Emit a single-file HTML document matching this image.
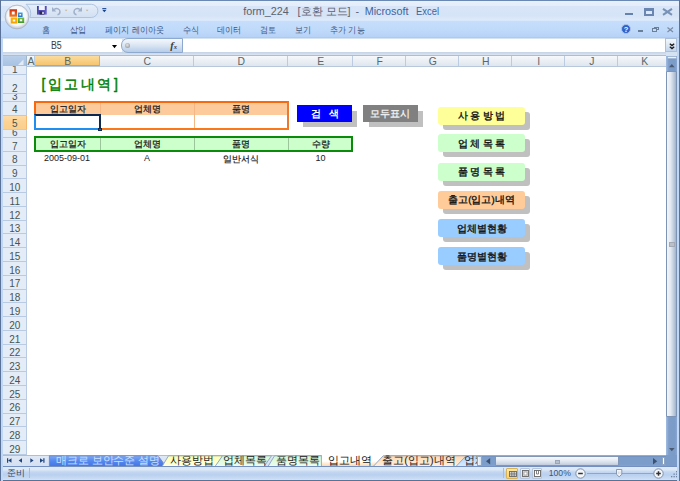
<!DOCTYPE html><html><head><meta charset='utf-8'><style>
*{margin:0;padding:0;box-sizing:border-box}
html,body{width:680px;height:481px;overflow:hidden;background:#fff;font-family:"Liberation Sans",sans-serif}
.a{position:absolute}
.t{position:absolute;white-space:nowrap;line-height:1}
svg{position:absolute}
</style></head><body><div class="a" style="left:0.00px;top:0.00px;width:680.00px;height:481.00px;background:#c4d7ef"></div>
<div class="a" style="left:0.00px;top:0.00px;width:680.00px;height:19.50px;background:linear-gradient(#e8f0fb 0,#e4edfa 4.5px,#d8e5f8 5.5px,#d6e4f7 15px,#e0ebf9 19.5px);border-top:1px solid #6a88b4"></div>
<div class="a" style="left:1.00px;top:19.50px;width:678.00px;height:18.80px;background:linear-gradient(#e6effb 0,#c6defc 1.2px,#bfd9fa 60%,#b7d2f7 94%,#a6c3ec)"></div>
<div class="a" style="left:1.00px;top:38.30px;width:678.00px;height:17.70px;background:#d5e2f2"></div>
<div class="a" style="left:3.00px;top:38.50px;width:118.50px;height:13.80px;background:#fff"></div>
<div class="a" style="left:183.00px;top:38.50px;width:483.00px;height:13.80px;background:#fff"></div>
<div class="a" style="left:3.00px;top:52.30px;width:663.00px;height:2.70px;background:linear-gradient(#c3d2e6,#dbe5f1)"></div>
<div class="a" style="left:3.00px;top:54.80px;width:663.00px;height:1.20px;background:#a9bedb"></div>
<div class="a" style="left:121.40px;top:38.40px;width:61.40px;height:14.20px;background:linear-gradient(#f5f8fc,#dce7f4 45%,#b6cdea);border:1px solid #8ea9cf;border-radius:7px 0 0 7px"></div>
<div class="a" style="left:125.30px;top:43.00px;width:5.00px;height:5.00px;background:radial-gradient(circle at 45% 40%,#e6e6e6,#a0a4aa 70%,#7f8894);border-radius:50%"></div>
<div class="t" style="left:170.3px;top:40.8px;font-family:'Liberation Serif',serif;font-size:10.5px;color:#3a3a3a;font-weight:bold"><i>f</i><span style='font-size:6.5px;position:relative;top:0.5px'><i>x</i></span></div>
<div class="t" style="left:50.80px;top:40.94px;font-size:10px;color:#3a3a3a;transform:scaleX(0.88);transform-origin:0 0">B5</div>
<svg style="left:111.8px;top:44.5px" width="5" height="4"><path d="M0 0H5L2.5 3.3Z" fill="#000"/></svg>
<div class="a" style="left:665.30px;top:38.30px;width:11.50px;height:14.00px;background:linear-gradient(#f3f7fc,#dce7f4 50%,#c2d5ee);border:1px solid #a9bfdc"></div>
<svg style="left:668.5px;top:42.5px" width="6" height="7"><path d="M0.8 0.8L3 2.6L5.2 0.8M0.8 3.8L3 5.6L5.2 3.8" stroke="#1a1a1a" stroke-width="1.3" fill="none"/></svg>
<div class="t" style="left:243.20px;top:6.36px;font-size:10.8px;color:#5a6270">form_224</div>
<div class="t" style="left:297.60px;top:6.36px;font-size:10.8px;color:#5a6270">[호환 모드]</div>
<div class="t" style="left:355.40px;top:6.36px;font-size:10.8px;color:#5a6270">-</div>
<div class="t" style="left:364.70px;top:6.36px;font-size:10.8px;color:#3d64a0">Microsoft</div>
<div class="t" style="left:415.70px;top:6.36px;font-size:10.8px;color:#3d64a0;transform:scaleX(0.87);transform-origin:0 0">Excel</div>
<svg style="left:0;top:0" width="110" height="20"><defs><linearGradient id="qp" x1="0" y1="0" x2="0" y2="1"><stop offset="0" stop-color="#e6eefa"/><stop offset="1" stop-color="#d2e0f3"/></linearGradient></defs><path d="M26 4.3H91.3A6.6 6.6 0 0 1 91.3 17.5H30A12 12 0 0 0 26 4.3Z" fill="url(#qp)" stroke="#a9bfdc" stroke-width="0.9"/></svg>
<svg style="left:37px;top:6px" width="10" height="9" viewBox="0 0 10 9">
<defs><linearGradient id="sv" x1="0" y1="0" x2="1" y2="1"><stop offset="0" stop-color="#3a3a9a"/><stop offset="1" stop-color="#6f62d6"/></linearGradient></defs>
<rect x="0" y="0" width="9.7" height="8.6" fill="url(#sv)"/><rect x="1.8" y="0" width="6" height="4" fill="#eef2fb"/><rect x="2.5" y="5.3" width="4.8" height="3.3" fill="#2a2a55"/><rect x="5.3" y="5.8" width="1.4" height="2.3" fill="#fff"/>
</svg>
<svg style="left:50px;top:5px" width="48" height="12" viewBox="0 0 48 12">
<path d="M4 4.5C7 2.5 10 4 10 6.8C10 8.5 9 9.5 7.5 9.8" stroke="#9fb0c8" stroke-width="1.5" fill="none"/><path d="M2 2V6.5H6.3Z" fill="#9fb0c8"/>
<path d="M14.8 4.8L17.4 4.8L16.1 6.3Z" fill="#c9b08a"/>
<path d="M30 4.5C27 2.5 24 4 24 6.8C24 8.5 25 9.5 26.5 9.8" stroke="#9fb0c8" stroke-width="1.5" fill="none"/><path d="M32 2V6.5H27.7Z" fill="#9fb0c8"/>
<path d="M35.8 4.8L38.4 4.8L37.1 6.3Z" fill="#c9b08a"/>
</svg>
<svg style="left:101.5px;top:7.8px" width="5" height="5"><rect x="0.3" y="0" width="4" height="0.9" fill="#15428b"/><path d="M0.2 1.8H4.5L2.35 4.2Z" fill="#15428b"/></svg>
<svg style="left:2px;top:2px" width="30" height="30" viewBox="0 0 30 30">
<defs><radialGradient id="ob" cx="50%" cy="45%" r="55%"><stop offset="0" stop-color="#ffffff"/><stop offset="0.72" stop-color="#f6f7f9"/><stop offset="0.85" stop-color="#d9dee6"/><stop offset="1" stop-color="#b8c0cc"/></radialGradient>
<linearGradient id="lr" x1="0" y1="0" x2="0" y2="1"><stop offset="0" stop-color="#cf2e12"/><stop offset="1" stop-color="#f07a1e"/></linearGradient>
<linearGradient id="ly" x1="0" y1="0" x2="0" y2="1"><stop offset="0" stop-color="#ffb400"/><stop offset="1" stop-color="#f5a000"/></linearGradient>
<linearGradient id="lg" x1="0" y1="0" x2="0" y2="1"><stop offset="0" stop-color="#7bc043"/><stop offset="1" stop-color="#3f9a2a"/></linearGradient>
<linearGradient id="lb" x1="0" y1="0" x2="0" y2="1"><stop offset="0" stop-color="#3aa0ee"/><stop offset="1" stop-color="#1f74c8"/></linearGradient></defs>
<circle cx="15" cy="15" r="11.9" fill="url(#ob)" stroke="#a9b3c1" stroke-width="0.8"/>
<path d="M7.5 7.2H15V14.7H7.5Z M9.8 9.5V12.4H12.7V9.5Z" fill="url(#lr)" fill-rule="evenodd"/>
<path d="M15.9 10.6H20.6V15H15.9Z M17.4 12.1V13.5H19.1V12.1Z" fill="url(#lb)" fill-rule="evenodd"/>
<path d="M8.7 15.6H15.3V21.6H8.7Z M10.8 17.6V19.6H13.2V17.6Z" fill="url(#ly)" fill-rule="evenodd"/>
<path d="M15.9 15.6H22.2V21H15.9Z M17.8 17.3V19.3H20.2V17.3Z" fill="url(#lg)" fill-rule="evenodd"/>
</svg>
<div class="a" style="left:625.30px;top:13.00px;width:7.70px;height:2.20px;background:#6582ac"></div>
<div class="a" style="left:643.50px;top:8.00px;width:10.00px;height:7.50px;border:2px solid #6a86b0;border-top:3px solid #6a86b0;background:#dde8f7"></div>
<svg style="left:662px;top:8px" width="11" height="7.5"><path d="M1 0.8L10 6.8M10 0.8L1 6.8" stroke="#7891b7" stroke-width="2"/></svg>
<div class="t" style="left:42.00px;top:26.18px;font-size:9px;color:#3b5683;transform:scaleX(0.9);transform-origin:0 0">홈</div>
<div class="t" style="left:70.00px;top:26.18px;font-size:9px;color:#3b5683;transform:scaleX(0.9);transform-origin:0 0">삽입</div>
<div class="t" style="left:105.00px;top:26.18px;font-size:9px;color:#3b5683;transform:scaleX(0.9);transform-origin:0 0">페이지 레이아웃</div>
<div class="t" style="left:182.50px;top:26.18px;font-size:9px;color:#3b5683;transform:scaleX(0.9);transform-origin:0 0">수식</div>
<div class="t" style="left:217.00px;top:26.18px;font-size:9px;color:#3b5683;transform:scaleX(0.9);transform-origin:0 0">데이터</div>
<div class="t" style="left:260.00px;top:26.18px;font-size:9px;color:#3b5683;transform:scaleX(0.9);transform-origin:0 0">검토</div>
<div class="t" style="left:295.00px;top:26.18px;font-size:9px;color:#3b5683;transform:scaleX(0.9);transform-origin:0 0">보기</div>
<div class="t" style="left:330.00px;top:26.18px;font-size:9px;color:#3b5683;transform:scaleX(0.9);transform-origin:0 0">추가 기능</div>
<svg style="left:621px;top:24px" width="10" height="10"><circle cx="5" cy="5" r="4.5" fill="#2d63cc" stroke="#b3c6e3" stroke-width="0.9"/><text x="5" y="8" font-size="7.5" font-weight="bold" fill="#fff" text-anchor="middle" font-family="Liberation Sans">?</text></svg>
<div class="a" style="left:638.00px;top:30.30px;width:5.00px;height:1.60px;background:#6a7f99"></div>
<div class="a" style="left:653.50px;top:26.50px;width:5.00px;height:3.50px;border:1px solid #6a7f99;border-top:1.6px solid #6a7f99"></div>
<div class="a" style="left:651.80px;top:28.30px;width:5.00px;height:3.50px;background:#c5dbf6;border:1px solid #6a7f99;border-top:1.6px solid #6a7f99"></div>
<svg style="left:667px;top:27px" width="6.5" height="5.5"><path d="M0.5 0.5L6 5M6 0.5L0.5 5" stroke="#7a8ba3" stroke-width="1.2"/></svg>
<div class="a" style="left:3.00px;top:56.00px;width:663.00px;height:399.00px;background:#fff"></div>
<div class="a" style="left:3.00px;top:56.00px;width:663.00px;height:10.80px;background:linear-gradient(#f6f8fb,#dfe6ef);border-bottom:1px solid #b7c7dc"></div>
<div class="a" style="left:3.00px;top:56.00px;width:23.60px;height:10.10px;background:linear-gradient(#b9cfea,#a7c1e3);border-right:1px solid #9eb6ce"></div>
<svg style="left:17px;top:58.5px" width="8" height="7"><path d="M6.5 0.5V6H1Z" fill="#e3ebf5"/></svg>
<div class="a" style="left:26.60px;top:56.00px;width:8.70px;height:10.10px;border-right:1.5px solid #bccbdf;"></div>
<div class="t" style="left:-119.05px;top:57.40px;width:300px;text-align:center;font-size:10.4px;color:#5a6868">A</div>
<div class="a" style="left:35.30px;top:56.00px;width:64.90px;height:10.10px;background:linear-gradient(#fadc9d,#f6c46f);border-right:1px solid #f2a54a;border-bottom:1px solid #f29a3a;"></div>
<div class="t" style="left:-82.25px;top:57.40px;width:300px;text-align:center;font-size:10.4px;color:#5a6868">B</div>
<div class="a" style="left:100.20px;top:56.00px;width:93.90px;height:10.10px;border-right:1.5px solid #bccbdf;"></div>
<div class="t" style="left:-2.85px;top:57.40px;width:300px;text-align:center;font-size:10.4px;color:#5a6868">C</div>
<div class="a" style="left:194.10px;top:56.00px;width:94.10px;height:10.10px;border-right:1.5px solid #bccbdf;"></div>
<div class="t" style="left:91.15px;top:57.40px;width:300px;text-align:center;font-size:10.4px;color:#5a6868">D</div>
<div class="a" style="left:288.20px;top:56.00px;width:64.80px;height:10.10px;border-right:1.5px solid #bccbdf;"></div>
<div class="t" style="left:170.60px;top:57.40px;width:300px;text-align:center;font-size:10.4px;color:#5a6868">E</div>
<div class="a" style="left:353.00px;top:56.00px;width:53.30px;height:10.10px;border-right:1.5px solid #bccbdf;"></div>
<div class="t" style="left:229.65px;top:57.40px;width:300px;text-align:center;font-size:10.4px;color:#5a6868">F</div>
<div class="a" style="left:406.30px;top:56.00px;width:53.00px;height:10.10px;border-right:1.5px solid #bccbdf;"></div>
<div class="t" style="left:282.80px;top:57.40px;width:300px;text-align:center;font-size:10.4px;color:#5a6868">G</div>
<div class="a" style="left:459.30px;top:56.00px;width:53.00px;height:10.10px;border-right:1.5px solid #bccbdf;"></div>
<div class="t" style="left:335.80px;top:57.40px;width:300px;text-align:center;font-size:10.4px;color:#5a6868">H</div>
<div class="a" style="left:512.30px;top:56.00px;width:53.00px;height:10.10px;border-right:1.5px solid #bccbdf;"></div>
<div class="t" style="left:388.80px;top:57.40px;width:300px;text-align:center;font-size:10.4px;color:#5a6868">I</div>
<div class="a" style="left:565.30px;top:56.00px;width:52.90px;height:10.10px;border-right:1.5px solid #bccbdf;"></div>
<div class="t" style="left:441.75px;top:57.40px;width:300px;text-align:center;font-size:10.4px;color:#5a6868">J</div>
<div class="a" style="left:618.20px;top:56.00px;width:52.80px;height:10.10px;border-right:1.5px solid #bccbdf;"></div>
<div class="t" style="left:494.60px;top:57.40px;width:300px;text-align:center;font-size:10.4px;color:#5a6868">K</div>
<div class="a" style="left:3.00px;top:66.10px;width:23.60px;height:389.00px;background:#e4ecf7;border-right:1px solid #b9cbe2"></div>
<div class="a" style="left:3.00px;top:66.60px;width:23.60px;height:8.50px;border-bottom:1px solid #b9cbe2;"></div>
<div class="a" style="left:3.00px;top:75.10px;width:23.60px;height:18.90px;border-bottom:1px solid #b9cbe2;"></div>
<div class="a" style="left:3.00px;top:94.00px;width:23.60px;height:8.10px;border-bottom:1px solid #b9cbe2;"></div>
<div class="a" style="left:3.00px;top:102.10px;width:23.60px;height:13.50px;border-bottom:1px solid #b9cbe2;"></div>
<div class="a" style="left:3.00px;top:115.60px;width:23.60px;height:14.80px;background:linear-gradient(#fddca8,#fcd395 40%,#fbcf8c);border-right:1px solid #f4b870;border-bottom:1px solid #f6c483;"></div>
<div class="a" style="left:3.00px;top:130.40px;width:23.60px;height:7.60px;border-bottom:1px solid #b9cbe2;"></div>
<div class="a" style="left:3.00px;top:138.00px;width:23.60px;height:13.78px;border-bottom:1px solid #b9cbe2;"></div>
<div class="a" style="left:3.00px;top:151.78px;width:23.60px;height:13.78px;border-bottom:1px solid #b9cbe2;"></div>
<div class="a" style="left:3.00px;top:165.56px;width:23.60px;height:13.78px;border-bottom:1px solid #b9cbe2;"></div>
<div class="a" style="left:3.00px;top:179.34px;width:23.60px;height:13.78px;border-bottom:1px solid #b9cbe2;"></div>
<div class="a" style="left:3.00px;top:193.12px;width:23.60px;height:13.78px;border-bottom:1px solid #b9cbe2;"></div>
<div class="a" style="left:3.00px;top:206.90px;width:23.60px;height:13.78px;border-bottom:1px solid #b9cbe2;"></div>
<div class="a" style="left:3.00px;top:220.68px;width:23.60px;height:13.78px;border-bottom:1px solid #b9cbe2;"></div>
<div class="a" style="left:3.00px;top:234.46px;width:23.60px;height:13.78px;border-bottom:1px solid #b9cbe2;"></div>
<div class="a" style="left:3.00px;top:248.24px;width:23.60px;height:13.78px;border-bottom:1px solid #b9cbe2;"></div>
<div class="a" style="left:3.00px;top:262.02px;width:23.60px;height:13.78px;border-bottom:1px solid #b9cbe2;"></div>
<div class="a" style="left:3.00px;top:275.80px;width:23.60px;height:13.78px;border-bottom:1px solid #b9cbe2;"></div>
<div class="a" style="left:3.00px;top:289.58px;width:23.60px;height:13.78px;border-bottom:1px solid #b9cbe2;"></div>
<div class="a" style="left:3.00px;top:303.36px;width:23.60px;height:13.78px;border-bottom:1px solid #b9cbe2;"></div>
<div class="a" style="left:3.00px;top:317.14px;width:23.60px;height:13.78px;border-bottom:1px solid #b9cbe2;"></div>
<div class="a" style="left:3.00px;top:330.92px;width:23.60px;height:13.78px;border-bottom:1px solid #b9cbe2;"></div>
<div class="a" style="left:3.00px;top:344.70px;width:23.60px;height:13.78px;border-bottom:1px solid #b9cbe2;"></div>
<div class="a" style="left:3.00px;top:358.48px;width:23.60px;height:13.78px;border-bottom:1px solid #b9cbe2;"></div>
<div class="a" style="left:3.00px;top:372.26px;width:23.60px;height:13.78px;border-bottom:1px solid #b9cbe2;"></div>
<div class="a" style="left:3.00px;top:386.04px;width:23.60px;height:13.78px;border-bottom:1px solid #b9cbe2;"></div>
<div class="a" style="left:3.00px;top:399.82px;width:23.60px;height:13.78px;border-bottom:1px solid #b9cbe2;"></div>
<div class="a" style="left:3.00px;top:413.60px;width:23.60px;height:13.78px;border-bottom:1px solid #b9cbe2;"></div>
<div class="a" style="left:3.00px;top:427.38px;width:23.60px;height:13.78px;border-bottom:1px solid #b9cbe2;"></div>
<div class="a" style="left:3.00px;top:441.16px;width:23.60px;height:13.78px;border-bottom:1px solid #b9cbe2;"></div>
<div class="a" style="left:3px;top:66.10px;width:23.6px;height:8.50px;overflow:hidden"><div class="t" style="left:0;top:-1.17px;width:23.6px;text-align:center;font-size:10px;color:#465454">1</div></div>
<div class="a" style="left:3px;top:74.60px;width:23.6px;height:18.90px;overflow:hidden"><div class="t" style="left:0;top:9.24px;width:23.6px;text-align:center;font-size:10px;color:#465454">2</div></div>
<div class="a" style="left:3px;top:93.50px;width:23.6px;height:8.10px;overflow:hidden"><div class="t" style="left:0;top:-1.57px;width:23.6px;text-align:center;font-size:10px;color:#465454">3</div></div>
<div class="a" style="left:3px;top:101.60px;width:23.6px;height:13.50px;overflow:hidden"><div class="t" style="left:0;top:3.84px;width:23.6px;text-align:center;font-size:10px;color:#465454">4</div></div>
<div class="a" style="left:3px;top:115.10px;width:23.6px;height:14.80px;overflow:hidden"><div class="t" style="left:0;top:4.34px;width:23.6px;text-align:center;font-size:10px;color:#465454">5</div></div>
<div class="a" style="left:3px;top:129.90px;width:23.6px;height:7.60px;overflow:hidden"><div class="t" style="left:0;top:-2.07px;width:23.6px;text-align:center;font-size:10px;color:#465454">6</div></div>
<div class="a" style="left:3px;top:137.50px;width:23.6px;height:13.78px;overflow:hidden"><div class="t" style="left:0;top:4.12px;width:23.6px;text-align:center;font-size:10px;color:#465454">7</div></div>
<div class="a" style="left:3px;top:151.28px;width:23.6px;height:13.78px;overflow:hidden"><div class="t" style="left:0;top:4.12px;width:23.6px;text-align:center;font-size:10px;color:#465454">8</div></div>
<div class="a" style="left:3px;top:165.06px;width:23.6px;height:13.78px;overflow:hidden"><div class="t" style="left:0;top:4.12px;width:23.6px;text-align:center;font-size:10px;color:#465454">9</div></div>
<div class="a" style="left:3px;top:178.84px;width:23.6px;height:13.78px;overflow:hidden"><div class="t" style="left:0;top:4.12px;width:23.6px;text-align:center;font-size:10px;color:#465454">10</div></div>
<div class="a" style="left:3px;top:192.62px;width:23.6px;height:13.78px;overflow:hidden"><div class="t" style="left:0;top:4.12px;width:23.6px;text-align:center;font-size:10px;color:#465454">11</div></div>
<div class="a" style="left:3px;top:206.40px;width:23.6px;height:13.78px;overflow:hidden"><div class="t" style="left:0;top:4.12px;width:23.6px;text-align:center;font-size:10px;color:#465454">12</div></div>
<div class="a" style="left:3px;top:220.18px;width:23.6px;height:13.78px;overflow:hidden"><div class="t" style="left:0;top:4.12px;width:23.6px;text-align:center;font-size:10px;color:#465454">13</div></div>
<div class="a" style="left:3px;top:233.96px;width:23.6px;height:13.78px;overflow:hidden"><div class="t" style="left:0;top:4.12px;width:23.6px;text-align:center;font-size:10px;color:#465454">14</div></div>
<div class="a" style="left:3px;top:247.74px;width:23.6px;height:13.78px;overflow:hidden"><div class="t" style="left:0;top:4.11px;width:23.6px;text-align:center;font-size:10px;color:#465454">15</div></div>
<div class="a" style="left:3px;top:261.52px;width:23.6px;height:13.78px;overflow:hidden"><div class="t" style="left:0;top:4.12px;width:23.6px;text-align:center;font-size:10px;color:#465454">16</div></div>
<div class="a" style="left:3px;top:275.30px;width:23.6px;height:13.78px;overflow:hidden"><div class="t" style="left:0;top:4.11px;width:23.6px;text-align:center;font-size:10px;color:#465454">17</div></div>
<div class="a" style="left:3px;top:289.08px;width:23.6px;height:13.78px;overflow:hidden"><div class="t" style="left:0;top:4.12px;width:23.6px;text-align:center;font-size:10px;color:#465454">18</div></div>
<div class="a" style="left:3px;top:302.86px;width:23.6px;height:13.78px;overflow:hidden"><div class="t" style="left:0;top:4.11px;width:23.6px;text-align:center;font-size:10px;color:#465454">19</div></div>
<div class="a" style="left:3px;top:316.64px;width:23.6px;height:13.78px;overflow:hidden"><div class="t" style="left:0;top:4.12px;width:23.6px;text-align:center;font-size:10px;color:#465454">20</div></div>
<div class="a" style="left:3px;top:330.42px;width:23.6px;height:13.78px;overflow:hidden"><div class="t" style="left:0;top:4.11px;width:23.6px;text-align:center;font-size:10px;color:#465454">21</div></div>
<div class="a" style="left:3px;top:344.20px;width:23.6px;height:13.78px;overflow:hidden"><div class="t" style="left:0;top:4.12px;width:23.6px;text-align:center;font-size:10px;color:#465454">22</div></div>
<div class="a" style="left:3px;top:357.98px;width:23.6px;height:13.78px;overflow:hidden"><div class="t" style="left:0;top:4.11px;width:23.6px;text-align:center;font-size:10px;color:#465454">23</div></div>
<div class="a" style="left:3px;top:371.76px;width:23.6px;height:13.78px;overflow:hidden"><div class="t" style="left:0;top:4.12px;width:23.6px;text-align:center;font-size:10px;color:#465454">24</div></div>
<div class="a" style="left:3px;top:385.54px;width:23.6px;height:13.78px;overflow:hidden"><div class="t" style="left:0;top:4.11px;width:23.6px;text-align:center;font-size:10px;color:#465454">25</div></div>
<div class="a" style="left:3px;top:399.32px;width:23.6px;height:13.78px;overflow:hidden"><div class="t" style="left:0;top:4.12px;width:23.6px;text-align:center;font-size:10px;color:#465454">26</div></div>
<div class="a" style="left:3px;top:413.10px;width:23.6px;height:13.78px;overflow:hidden"><div class="t" style="left:0;top:4.11px;width:23.6px;text-align:center;font-size:10px;color:#465454">27</div></div>
<div class="a" style="left:3px;top:426.88px;width:23.6px;height:13.78px;overflow:hidden"><div class="t" style="left:0;top:4.12px;width:23.6px;text-align:center;font-size:10px;color:#465454">28</div></div>
<div class="a" style="left:3px;top:440.66px;width:23.6px;height:13.78px;overflow:hidden"><div class="t" style="left:0;top:4.11px;width:23.6px;text-align:center;font-size:10px;color:#465454">29</div></div>
<div class="t" style="left:41.50px;top:77.15px;font-size:14px;color:#008000;-webkit-text-stroke:0.45px #008000;letter-spacing:2.5px">[입고내역]</div>
<div class="a" style="left:34.00px;top:101.00px;width:255.00px;height:29.00px;border:2px solid #f8680f;border-right-color:#ea7a30;border-bottom-color:#fb7818;background:linear-gradient(#fdca9c 0,#fdca9c 12px,#fff 12px)"></div>
<div class="a" style="left:99.70px;top:102.60px;width:1.00px;height:25.00px;background:#f3b886"></div>
<div class="a" style="left:193.60px;top:102.60px;width:1.00px;height:25.00px;background:#f3b886"></div>
<div class="t" style="left:-82.30px;top:105.24px;width:300px;text-align:center;font-size:8.7px;color:#1a1a1a;-webkit-text-stroke:0.25px #1a1a1a">입고일자</div>
<div class="t" style="left:-2.90px;top:105.24px;width:300px;text-align:center;font-size:8.7px;color:#1a1a1a;-webkit-text-stroke:0.25px #1a1a1a">업체명</div>
<div class="t" style="left:91.10px;top:105.24px;width:300px;text-align:center;font-size:8.7px;color:#1a1a1a;-webkit-text-stroke:0.25px #1a1a1a">품명</div>
<div class="a" style="left:34.25px;top:114.30px;width:66.75px;height:15.45px;border:2px solid #0f2850;border-left:2.2px solid #1e8ef0;border-bottom-color:#1e8ef0;background:#fff"></div>
<div class="a" style="left:98.00px;top:127.60px;width:4.00px;height:3.40px;background:#1f5ea8;border:0.7px solid #0f2850"></div>
<div class="a" style="left:34.00px;top:136.00px;width:319.00px;height:16.00px;border:2px solid #0b8a0b;background:#ccffcc"></div>
<div class="a" style="left:99.70px;top:138.00px;width:1.00px;height:11.80px;background:#9cc59c"></div>
<div class="a" style="left:193.60px;top:138.00px;width:1.00px;height:11.80px;background:#9cc59c"></div>
<div class="a" style="left:288.20px;top:138.00px;width:1.00px;height:11.80px;background:#9cc59c"></div>
<div class="t" style="left:-82.30px;top:140.24px;width:300px;text-align:center;font-size:8.7px;color:#1a1a1a;-webkit-text-stroke:0.25px #1a1a1a">입고일자</div>
<div class="t" style="left:-2.90px;top:140.24px;width:300px;text-align:center;font-size:8.7px;color:#1a1a1a;-webkit-text-stroke:0.25px #1a1a1a">업체명</div>
<div class="t" style="left:91.10px;top:140.24px;width:300px;text-align:center;font-size:8.7px;color:#1a1a1a;-webkit-text-stroke:0.25px #1a1a1a">품명</div>
<div class="t" style="left:170.60px;top:140.24px;width:300px;text-align:center;font-size:8.7px;color:#1a1a1a;-webkit-text-stroke:0.25px #1a1a1a">수량</div>
<div class="t" style="left:-83.00px;top:154.38px;width:300px;text-align:center;font-size:9px;color:#222">2005-09-01</div>
<div class="t" style="left:-2.90px;top:154.38px;width:300px;text-align:center;font-size:9px;color:#222">A</div>
<div class="t" style="left:91.10px;top:154.64px;width:300px;text-align:center;font-size:8.7px;color:#1a1a1a;-webkit-text-stroke:0.2px #1a1a1a">일반서식</div>
<div class="t" style="left:170.60px;top:154.38px;width:300px;text-align:center;font-size:9px;color:#222">10</div>
<div class="a" style="left:303.00px;top:110.60px;width:54.00px;height:16.20px;background:#c0c0c0"></div>
<div class="a" style="left:297.30px;top:105.20px;width:54.70px;height:16.40px;background:#0000ff"></div>
<div class="t" style="left:174.60px;top:108.96px;width:300px;text-align:center;font-size:9.5px;color:#fff;font-weight:bold">검 &nbsp; 색</div>
<div class="a" style="left:368.80px;top:110.60px;width:54.00px;height:16.20px;background:#c0c0c0"></div>
<div class="a" style="left:363.20px;top:105.20px;width:54.40px;height:16.40px;background:#808080"></div>
<div class="t" style="left:240.40px;top:108.96px;width:300px;text-align:center;font-size:9.5px;color:#eee;font-weight:bold">모두표시</div>
<div class="a" style="left:443.00px;top:111.50px;width:87.00px;height:18.30px;background:#c0c0c0;border-radius:3px"></div>
<div class="a" style="left:438.00px;top:106.50px;width:87.00px;height:18.30px;background:#ffff99;border-radius:3px"></div>
<div class="t" style="left:331.50px;top:111.46px;width:300px;text-align:center;font-size:9.5px;color:#111;-webkit-text-stroke:0.35px #111">사 용 방 법</div>
<div class="a" style="left:443.00px;top:139.00px;width:87.00px;height:18.30px;background:#c0c0c0;border-radius:3px"></div>
<div class="a" style="left:438.00px;top:134.00px;width:87.00px;height:18.30px;background:#ccffcc;border-radius:3px"></div>
<div class="t" style="left:331.50px;top:138.96px;width:300px;text-align:center;font-size:9.5px;color:#111;-webkit-text-stroke:0.35px #111">업 체 목 록</div>
<div class="a" style="left:443.00px;top:167.50px;width:87.00px;height:18.30px;background:#c0c0c0;border-radius:3px"></div>
<div class="a" style="left:438.00px;top:162.50px;width:87.00px;height:18.30px;background:#ccffcc;border-radius:3px"></div>
<div class="t" style="left:331.50px;top:167.46px;width:300px;text-align:center;font-size:9.5px;color:#111;-webkit-text-stroke:0.35px #111">품 명 목 록</div>
<div class="a" style="left:443.00px;top:195.50px;width:87.00px;height:18.30px;background:#c0c0c0;border-radius:3px"></div>
<div class="a" style="left:438.00px;top:190.50px;width:87.00px;height:18.30px;background:#ffcc99;border-radius:3px"></div>
<div class="t" style="left:331.50px;top:195.46px;width:300px;text-align:center;font-size:9.5px;color:#111;-webkit-text-stroke:0.35px #111">출고(입고)내역</div>
<div class="a" style="left:443.00px;top:223.75px;width:87.00px;height:18.30px;background:#c0c0c0;border-radius:3px"></div>
<div class="a" style="left:438.00px;top:218.75px;width:87.00px;height:18.30px;background:#99ccff;border-radius:3px"></div>
<div class="t" style="left:331.50px;top:223.71px;width:300px;text-align:center;font-size:9.5px;color:#111;-webkit-text-stroke:0.35px #111">업체별현황</div>
<div class="a" style="left:443.00px;top:252.00px;width:87.00px;height:18.30px;background:#c0c0c0;border-radius:3px"></div>
<div class="a" style="left:438.00px;top:247.00px;width:87.00px;height:18.30px;background:#99ccff;border-radius:3px"></div>
<div class="t" style="left:331.50px;top:251.96px;width:300px;text-align:center;font-size:9.5px;color:#111;-webkit-text-stroke:0.35px #111">품명별현황</div>
<div class="a" style="left:665.50px;top:56.00px;width:11.50px;height:399.00px;background:linear-gradient(90deg,#a3bde3,#7e9ec9 25%,#7b9bc8 80%,#8aa6cf)"></div>
<div class="a" style="left:666.50px;top:56.00px;width:10.50px;height:3.00px;background:linear-gradient(#fbfdff,#dce6f2);border:1px solid #a4b9d6;border-radius:1px"></div>
<div class="a" style="left:665.50px;top:59.00px;width:11.50px;height:11.80px;background:linear-gradient(90deg,#a3bde3,#7e9ec9 25%,#7b9bc8 80%,#8aa6cf)"></div>
<svg style="left:668.8px;top:64px" width="6" height="4"><path d="M0 3.3H5.6L2.8 0Z" fill="#4a5a70"/></svg>
<div class="a" style="left:665.50px;top:70.80px;width:11.50px;height:346.50px;background:linear-gradient(90deg,#f4f6f7,#e2e9f2 40%,#b8c6d8 80%,#9fb2cb);border:1px solid #7e94b5;border-radius:1px"></div>
<div class="a" style="left:669.00px;top:242.00px;width:6.00px;height:5.00px;background:#babfc8;border:0.6px solid #a3aab6"></div>
<div class="a" style="left:665.50px;top:417.30px;width:11.50px;height:37.70px;background:linear-gradient(90deg,#a3bde3,#7e9ec9 25%,#7b9bc8 80%,#8aa6cf)"></div>
<svg style="left:668.8px;top:448px" width="6" height="4"><path d="M0 0H5.6L2.8 3.3Z" fill="#4a5a70"/></svg>
<div class="a" style="left:3.00px;top:455.00px;width:662.50px;height:11.50px;background:linear-gradient(#dfe8f5,#d3dff0);border-top:1px solid #a9bfdc"></div>
<svg style="left:0;top:455px" width="50" height="11" viewBox="0 0 50 11">
<path d="M11.5 3.2L8.2 5.5L11.5 7.8Z M7 3.2H8.2V7.8H7Z" fill="#1f467f"/>
<path d="M22 3.2L18.7 5.5L22 7.8Z" fill="#1f467f"/>
<path d="M30.3 3.2L33.6 5.5L30.3 7.8Z" fill="#1f467f"/>
<path d="M40 3.2L43.3 5.5L40 7.8Z M43.3 3.2H44.5V7.8H43.3Z" fill="#1f467f"/>
</svg>
<svg width="0" height="0"><defs><linearGradient id="gy" x1="0" y1="0" x2="0" y2="1"><stop offset="0" stop-color="#ffffa8"/><stop offset="1" stop-color="#ffffe8"/></linearGradient><linearGradient id="gg" x1="0" y1="0" x2="0" y2="1"><stop offset="0" stop-color="#d2f8d2"/><stop offset="1" stop-color="#eefcee"/></linearGradient><linearGradient id="go" x1="0" y1="0" x2="0" y2="1"><stop offset="0" stop-color="#ffd8b0"/><stop offset="1" stop-color="#fff0e0"/></linearGradient><linearGradient id="gl" x1="0" y1="0" x2="0" y2="1"><stop offset="0" stop-color="#a9d2ff"/><stop offset="1" stop-color="#d9ecff"/></linearGradient><linearGradient id="gb" x1="0" y1="0" x2="0" y2="1"><stop offset="0" stop-color="#7ea8f4"/><stop offset="0.5" stop-color="#5487ee"/><stop offset="1" stop-color="#4475e6"/></linearGradient><linearGradient id="ga" x1="0" y1="0" x2="0" y2="1"><stop offset="0" stop-color="#ffffff"/><stop offset="0.55" stop-color="#ffffff"/><stop offset="1" stop-color="#ffd7a8"/></linearGradient></defs></svg>
<svg style="left:0;top:0" width="680" height="481"><path d="M49.4 455.8H158L166 466.5H49.4Z" fill="url(#gb)" stroke="#6c89bd" stroke-width="0.9"/></svg>
<svg style="left:0;top:0" width="680" height="481"><path d="M162 466.5L168.5 455.8H222.5L216 466.5Z" fill="url(#gy)" stroke="#8aa2c4" stroke-width="0.9"/></svg>
<svg style="left:0;top:0" width="680" height="481"><path d="M215 466.5L222.5 455.8H271.5L264 466.5Z" fill="url(#gg)" stroke="#8aa2c4" stroke-width="0.9"/></svg>
<svg style="left:0;top:0" width="680" height="481"><path d="M268 466.5L274.5 455.8H327.9L321.4 466.5Z" fill="url(#gg)" stroke="#8aa2c4" stroke-width="0.9"/></svg>
<svg style="left:0;top:0" width="680" height="481"><path d="M321.4 454.6V466.2H380L390 454.6Z" fill="url(#ga)"/><path d="M321.4 455.2V466.2" stroke="#8aa2c4" stroke-width="0.9"/></svg>
<svg style="left:0;top:0" width="680" height="481"><path d="M455.5 466.5L462.5 455.8H492L485 466.5Z" fill="url(#gl)" stroke="#8aa2c4" stroke-width="0.9"/></svg>
<svg style="left:0;top:0" width="680" height="481"><path d="M373.2 466.5L383.2 455.8H466L456 466.5Z" fill="url(#go)" stroke="#8aa2c4" stroke-width="0.9"/></svg>
<div class="t" style="left:56.00px;top:454.97px;font-size:10.9px;color:#c9e0ff;letter-spacing:-0.1px">매크로 보안수준 설명</div>
<div class="t" style="left:170.00px;top:454.97px;font-size:10.9px;color:#222">사용방법</div>
<div class="t" style="left:223.00px;top:454.97px;font-size:10.9px;color:#222">업체목록</div>
<div class="t" style="left:275.90px;top:454.97px;font-size:10.9px;color:#222">품명목록</div>
<div class="t" style="left:464.40px;top:454.97px;font-size:10.9px;color:#222">업체</div>
<div class="t" style="left:382.30px;top:454.97px;font-size:10.9px;color:#222">출고(입고)내역</div>
<div class="t" style="left:328.00px;top:454.97px;font-size:10.9px;color:#111">입고내역</div>
<div class="a" style="left:482.00px;top:455.00px;width:183.50px;height:11.50px;background:linear-gradient(#a9c4e8 0,#6f8fbf 1.2px,#7c9dc9 2.5px,#7c9dc9 9px,#86a4cf)"></div>
<div class="a" style="left:476.50px;top:455.50px;width:5.50px;height:10.50px;background:linear-gradient(90deg,#f3f6fb,#d6e1ef);border:1px solid #8ea5c4"></div>
<svg style="left:486px;top:458px" width="5" height="7"><path d="M4.2 0V6.6L0 3.3Z" fill="#3d5272"/></svg>
<div class="a" style="left:665.50px;top:455.00px;width:11.50px;height:11.50px;background:#7b9bc8"></div>
<div class="a" style="left:494.80px;top:455.60px;width:124.60px;height:10.40px;background:linear-gradient(#f7f9fb,#e9eef4 35%,#d2dbe7 75%,#bfcadb);border:1px solid #8296b5;border-radius:1px"></div>
<div class="a" style="left:555.40px;top:459.60px;width:4.40px;height:4.40px;background:#b8c2cf;border:1px solid #98a6b8"></div>
<svg style="left:653px;top:458px" width="5" height="7"><path d="M0 0V6.6L4.2 3.3Z" fill="#3d5272"/></svg>
<div class="a" style="left:661.50px;top:456.80px;width:3.50px;height:8.70px;background:#fff;border:1px solid #8ea5c4"></div>
<div class="a" style="left:1.20px;top:466.00px;width:677.30px;height:14.00px;background:linear-gradient(#dfe9f8 0,#dde8f7 2.5px,#c3d7f1 5px,#b9d0ef 60%,#c9dbf3 88%,#d3e2f5);border-top:1px solid #7390c0"></div>
<div class="a" style="left:0.00px;top:479.90px;width:680.00px;height:1.10px;background:#5a7198"></div>
<div class="t" style="left:7.30px;top:469.25px;font-size:8.8px;color:#2e3e5c">준비</div>
<div class="a" style="left:28.50px;top:467.50px;width:1.00px;height:10.50px;background:#a9bcd6"></div>
<div class="a" style="left:502.50px;top:467.50px;width:1.00px;height:10.50px;background:#a9bcd6"></div>
<div class="a" style="left:506.00px;top:468.40px;width:12.00px;height:10.30px;background:linear-gradient(#ffe8a6,#ffcf60);border:1px solid #d9b35a;border-radius:1px"></div>
<svg style="left:508.5px;top:470.5px" width="8" height="6"><rect x="0.5" y="0.5" width="7" height="5" fill="#fff" stroke="#666" stroke-width="0.9"/><path d="M0.5 2.2H7.5M0.5 3.9H7.5M2.8 0.5V5.5M5.2 0.5V5.5" stroke="#666" stroke-width="0.8"/></svg>
<div class="a" style="left:519.50px;top:468.40px;width:10.50px;height:10.30px;background:linear-gradient(#eef3f9,#d3dfee);border:1px solid #b6c6da;border-radius:1px"></div>
<svg style="left:521.5px;top:470.2px" width="7" height="7"><rect x="0.5" y="0.5" width="6" height="6" fill="#ddd" stroke="#666" stroke-width="0.9"/><rect x="2" y="2" width="3" height="3" fill="#fff" stroke="#888" stroke-width="0.6"/></svg>
<div class="a" style="left:531.50px;top:468.40px;width:10.50px;height:10.30px;background:linear-gradient(#eef3f9,#d3dfee);border:1px solid #b6c6da;border-radius:1px"></div>
<svg style="left:533.5px;top:470.2px" width="7" height="7"><rect x="0.5" y="0.5" width="6" height="6" fill="#fff" stroke="#666" stroke-width="0.9"/><path d="M2.5 0.5V4H4.5V0.5" stroke="#666" stroke-width="0.8" fill="none"/></svg>
<div class="t" style="left:548.80px;top:468.92px;font-size:8.6px;color:#34558a">100%</div>
<svg style="left:575px;top:468px" width="11" height="11"><circle cx="5.5" cy="5.5" r="4.7" fill="#f2f5fa" stroke="#7d8ea8" stroke-width="1"/><path d="M3.2 5.5H7.8" stroke="#333" stroke-width="1.5"/></svg>
<div class="a" style="left:586.50px;top:473.00px;width:67.00px;height:1.20px;background:#95a5bc"></div>
<svg style="left:616px;top:469px" width="7" height="9"><path d="M0.5 0.5H5.8V5.3L3.15 7.8L0.5 5.3Z" fill="#f4f6fa" stroke="#7d8ea8" stroke-width="0.9"/><path d="M2.3 2.5V5.2M4 2.5V5.2" stroke="#b5bfcc" stroke-width="0.6"/></svg>
<svg style="left:653.2px;top:468px" width="11" height="11"><circle cx="5.5" cy="5.5" r="4.7" fill="#f2f5fa" stroke="#7d8ea8" stroke-width="1"/><path d="M3.2 5.5H7.8M5.5 3.2V7.8" stroke="#333" stroke-width="1.5"/></svg>
<svg style="left:671px;top:471px" width="7" height="7"><g fill="#6f83a3"><rect x="5" y="0" width="1.3" height="1.3"/><rect x="2.5" y="2.5" width="1.3" height="1.3"/><rect x="5" y="2.5" width="1.3" height="1.3"/><rect x="0" y="5" width="1.3" height="1.3"/><rect x="2.5" y="5" width="1.3" height="1.3"/><rect x="5" y="5" width="1.3" height="1.3"/></g></svg>
<div class="a" style="left:1.20px;top:38.00px;width:1.50px;height:443.00px;background:#c0d8f6"></div>
<div class="a" style="left:677.00px;top:38.00px;width:1.50px;height:443.00px;background:#c0d8f6"></div>
<div class="a" style="left:0.00px;top:0.00px;width:1.20px;height:481.00px;background:#5a7198"></div>
<div class="a" style="left:678.50px;top:0.00px;width:1.50px;height:481.00px;background:#5a7198"></div></body></html>
